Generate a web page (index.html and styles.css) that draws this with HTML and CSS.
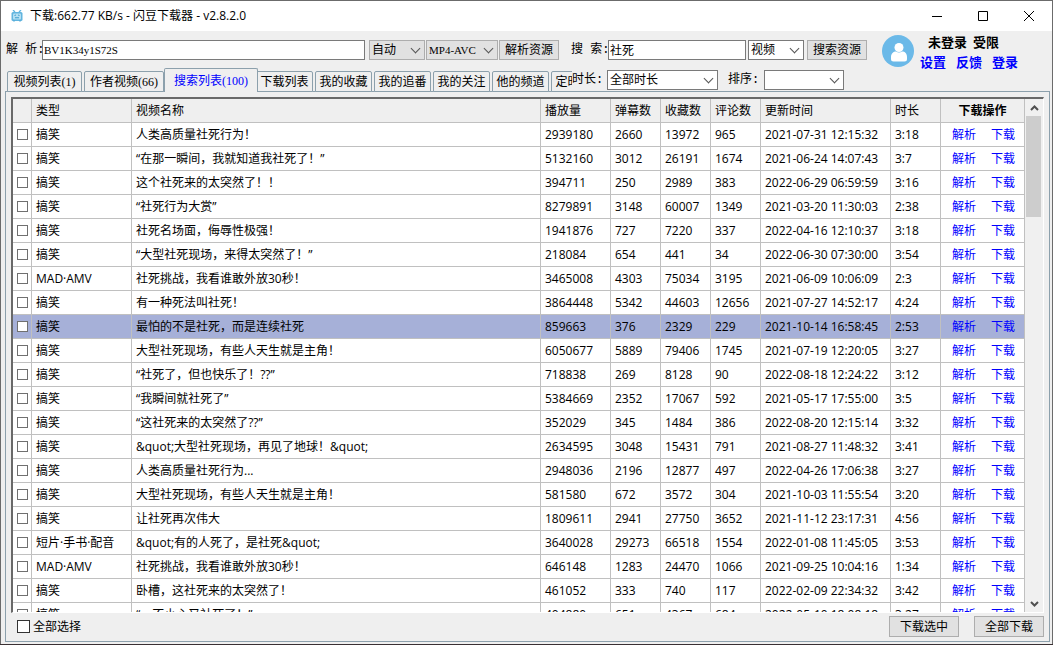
FILE: index.html
```html
<!DOCTYPE html>
<html lang="zh-CN">
<head>
<meta charset="utf-8">
<title>闪豆下载器</title>
<link rel="stylesheet" href="styles.css">
</head>
<body>
<div class="window">
  <header class="titlebar">
    <svg class="app-icon" viewBox="0 0 12 12" width="12" height="12">
      <path d="M2 0l2 2M10 0L8 2" stroke="#62b5df" stroke-width="1.3"/>
      <rect x="0.500" y="2" width="11" height="9" rx="1.5" fill="#62b5df"/>
      <rect x="2" y="3.5" width="8" height="6" rx="1" fill="#b4dff2"/>
      <path d="M3.500 5.500L5 5M8.500 5.500L7 5M4 7.500l1 .5 1-.5 1 .5 1-.5M3 10.500v1.200M9 10.500v1.200" stroke="#3f9fd0" fill="none"/>
    </svg>
    <h1 class="title">下载:662.77 KB/s - 闪豆下载器 - v2.8.2.0</h1>
    <div class="window-buttons">
      <button type="button" aria-label="最小化"><svg width="12" height="12" viewBox="0 0 12 12"><path d="M1 6.500h10"/></svg></button>
      <button type="button" aria-label="最大化"><svg width="12" height="12" viewBox="0 0 12 12"><path d="M1.500 1.500h9v9h-9z"/></svg></button>
      <button type="button" aria-label="关闭"><svg width="12" height="12" viewBox="0 0 12 12"><path d="M1 1l10 10M11 1L1 11"/></svg></button>
    </div>
  </header>

  <section class="top">
    <div class="controls">
      <form class="toolbar">
        <label class="parse-label" for="parse">解 析:</label>
        <input class="field parse-field" id="parse" type="text" value="BV1K34y1S72S">
        <span class="combo combo-flat combo-mode"><select aria-label="模式"><option>自动</option></select></span>
        <span class="combo combo-flat combo-format"><select class="latin" aria-label="格式"><option>MP4-AVC</option></select></span>
        <button class="btn btn-tool" type="button">解析资源</button>
        <label class="search-label" for="search">搜 索:</label>
        <input class="field search-field" id="search" type="text" value="社死">
        <span class="combo combo-kind"><select aria-label="类别"><option>视频</option></select></span>
        <button class="btn btn-tool" type="button">搜索资源</button>
      </form>
      <div class="second-row">
        <nav class="tabs" role="tablist">
          <button class="tab tab-one" role="tab" type="button">视频列表(1)</button>
          <button class="tab tab-two" role="tab" type="button">作者视频(66)</button>
          <button class="tab tab-active" role="tab" type="button" aria-selected="true">搜索列表(100)</button>
          <button class="tab" role="tab" type="button">下载列表</button>
          <button class="tab" role="tab" type="button">我的收藏</button>
          <button class="tab" role="tab" type="button">我的追番</button>
          <button class="tab" role="tab" type="button">我的关注</button>
          <button class="tab" role="tab" type="button">他的频道</button>
          <button class="tab" role="tab" type="button">定时下载</button>
        </nav>
        <label class="filter-label" for="duration">时长:</label>
        <span class="combo combo-duration"><select id="duration"><option>全部时长</option></select></span>
        <label class="sort-label" for="sort">排序:</label>
        <span class="combo combo-sort"><select id="sort"><option></option></select></span>
      </div>
    </div>
    <aside class="user">
      <svg class="avatar" width="32" height="32" viewBox="0 0 32 32">
        <circle cx="16" cy="16" r="16" fill="#6bb9e8"/>
        <circle cx="17" cy="12.500" r="4.500" fill="#fff"/>
        <path d="M9 24v-2c0-3.500 2.500-5.500 5-5.500q3 2 6 0c3 0 5 2 5 5.500v2q0 2.500-2.500 2.500h-11Q9 26.500 9 24z" fill="#fff"/>
      </svg>
      <div class="account">
        <p class="status"><span>未登录</span><span>受限</span></p>
        <p class="links"><a href="#settings">设置</a><a href="#feedback">反馈</a><a href="#login">登录</a></p>
      </div>
    </aside>
  </section>

  <main class="panel">
    <div class="list">
      <div class="list-view">
        <table>
          <colgroup>
            <col class="c-check"><col class="c-type"><col><col class="c-plays">
            <col class="c-count"><col class="c-count"><col class="c-count">
            <col class="c-time"><col class="c-length"><col class="c-actions">
          </colgroup>
          <thead>
            <tr><th></th><th>类型</th><th>视频名称</th><th>播放量</th><th>弹幕数</th><th>收藏数</th><th>评论数</th><th>更新时间</th><th>时长</th><th class="actions-head">下载操作</th></tr>
          </thead>
          <tbody id="rows"></tbody>
        </table>
      </div>
      <div class="scrollbar">
        <button class="up" type="button" aria-label="向上滚动"><svg width="9" height="6" viewBox="0 0 9 6"><path d="M1 5l3.500-3.500L8 5"/></svg></button>
        <div class="thumb"></div>
        <button class="down" type="button" aria-label="向下滚动"><svg width="9" height="6" viewBox="0 0 9 6"><path d="M1 1l3.500 3.500L8 1"/></svg></button>
      </div>
    </div>
    <footer class="footer">
      <label class="select-all"><input class="check check-all" type="checkbox">全部选择</label>
      <button class="btn btn-wide" type="button">下载选中</button>
      <button class="btn btn-wide" type="button">全部下载</button>
    </footer>
  </main>
</div>
<script src="app.js"></script>
</body>
</html>
```
FILE: styles.css
```css
* {
  box-sizing: border-box;
}

body {
  margin: 0;
  height: 100vh;
  padding-bottom: 1px;
  background: #3a3033;
  color: #000;
  font: 12px/16px "Open Sans", "Noto Sans CJK SC", sans-serif;
}

button,
input,
select {
  margin: 0;
  color: inherit;
  font: inherit;
}

.window {
  display: flex;
  flex-direction: column;
  height: 100%;
  border: 1px solid #6b6b6b;
  border-bottom: 0;
  background: #efefef;
}

.titlebar {
  display: flex;
  flex: none;
  align-items: center;
  height: 30px;
  padding-left: 10px;
  background: #fff;
}

.title {
  flex: 1;
  margin: 0 0 0 7px;
  font-size: 12px;
  font-weight: 400;
}

.window-buttons {
  display: flex;
}

.window-buttons button {
  display: flex;
  align-items: center;
  justify-content: center;
  width: 46px;
  height: 28px;
  padding: 0;
  border: 0;
  background: none;
}

.window-buttons path {
  fill: none;
  stroke: #000;
}

/* Toolbar and tabs */
.top {
  display: flex;
  flex: none;
  font-family: "Liberation Serif", "Noto Sans CJK SC", sans-serif;
}

.controls {
  flex: 1;
  min-width: 0;
}

.toolbar {
  display: flex;
  align-items: center;
  height: 37px;
  padding: 0 15px 0 5px;
}

.toolbar label,
.second-row label {
  flex: none;
  font-family: "Liberation Mono", "Noto Sans CJK SC", monospace;
  white-space: pre;
}

.toolbar .parse-label {
  width: 36px;
}

.toolbar .search-label {
  width: 37px;
  margin-left: 12px;
}

.field {
  min-width: 0;
  height: 20px;
  padding: 0 1px;
  border: 1px solid #7a7a7a;
  background: #fff;
}

.parse-field {
  flex: 1;
  margin-right: 4px;
  font-size: 11px;
}

.search-field {
  flex: none;
  width: 138px;
}

.combo {
  position: relative;
  display: block;
  flex: none;
  height: 20px;
}

.combo select {
  width: 100%;
  height: 100%;
  padding: 0 18px 0 2px;
  border: 1px solid #7a7a7a;
  border-radius: 0;
  background: #fff;
  appearance: none;
}

.combo-flat select {
  border-color: #adadad;
  background: #e1e1e1;
}

.combo .latin {
  padding-right: 16px;
  font-size: 11px;
}

.combo::after {
  content: "";
  position: absolute;
  top: 5px;
  right: 6px;
  width: 6px;
  height: 6px;
  border: solid #555;
  border-width: 0 1px 1px 0;
  transform: rotate(45deg);
  pointer-events: none;
}

.combo-mode {
  width: 56px;
  margin-right: 1px;
}

.combo-format {
  width: 72px;
  margin-right: 1px;
}

.combo-kind {
  width: 56px;
  margin: 0 3px 0 2px;
}

.combo-duration {
  width: 111px;
}

.combo-sort {
  width: 80px;
}

.btn {
  flex: none;
  height: 20px;
  padding: 0;
  border: 1px solid #adadad;
  background: #e1e1e1;
  white-space: nowrap;
}

.btn-tool {
  width: 60px;
}

.second-row {
  display: flex;
  align-items: center;
  height: 24px;
  padding: 0 38px 0 6px;
}

.tabs {
  position: relative;
  z-index: 1;
  display: flex;
  flex: 1;
  align-items: flex-end;
  gap: 2px;
  min-width: 0;
  height: 24px;
  overflow: hidden;
}

.tab {
  flex: none;
  width: 57px;
  height: 21px;
  padding: 0;
  border: 1px solid #8ca0ac;
  border-radius: 2px 2px 0 0;
  background: #efefef;
  white-space: nowrap;
}

.tab-one {
  width: 75px;
}

.tab-two {
  width: 80px;
  margin-right: -2px;
}

.tab-active {
  z-index: 1;
  width: 94px;
  height: 24px;
  margin-right: -4px;
  border-bottom: 0;
  color: #00f;
}

.second-row .filter-label {
  width: 35px;
}

.second-row .sort-label {
  width: 36px;
  margin-left: 10px;
}

.user {
  display: flex;
  flex: none;
  width: 170px;
  padding-top: 4px;
}

.account {
  margin-left: 6px;
  font-size: 13px;
  font-weight: 700;
  line-height: 20px;
}

.avatar {
  flex: none;
}

.status,
.links {
  display: flex;
  margin: 0;
}

.status {
  gap: 6px;
  height: 18px;
  padding-left: 8px;
  line-height: 16px;
}

.links {
  gap: 10px;
}

a {
  color: #00f;
  text-decoration: none;
}

/* Result list */
.panel {
  display: flex;
  flex: 1;
  flex-direction: column;
  min-height: 0;
  margin: -1px 2px 2px 4px;
  padding: 5px 5px 4px;
  border: 1px solid #8ca0ac;
}

.list {
  display: flex;
  flex: 1;
  min-height: 0;
  border: 2px solid #696969;
  border-right: 1px solid #fff;
  border-bottom: 1px solid #fff;
}

.list-view {
  flex: 1;
  min-width: 0;
  overflow: hidden;
  background: #fff;
}

table {
  width: 100%;
  border-collapse: separate;
  border-spacing: 0;
  table-layout: fixed;
}

th,
td {
  height: 24px;
  padding: 0 4px;
  border-right: 1px solid #c0c0c0;
  border-bottom: 1px solid #c0c0c0;
  text-align: left;
  font-weight: 400;
  white-space: nowrap;
}

th {
  background: #efefef;
}

.actions-head {
  text-align: center;
  font-weight: 700;
}

.c-check {
  width: 19px;
}

.c-type {
  width: 100px;
}

.c-plays {
  width: 70px;
}

.c-count,
.c-length {
  width: 50px;
}

.c-time {
  width: 130px;
}

.c-actions {
  width: 84px;
}

.selected td {
  background: #a6b0d8;
}

.actions a {
  margin-left: 7px;
}

.actions a + a {
  margin-left: 15px;
}

.check {
  display: block;
  width: 11px;
  height: 11px;
  border: 1px solid #707070;
  background: #fff;
  appearance: none;
}

.check:checked {
  background: #707070;
}

.scrollbar {
  display: flex;
  flex: none;
  flex-direction: column;
  width: 18px;
  background: #f0f0f0;
}

.scrollbar button {
  flex: none;
  height: 17px;
  padding: 0;
  border: 0;
  background: none;
  line-height: 6px;
}

.scrollbar path {
  fill: none;
  stroke: #505050;
  stroke-width: 2;
}

.thumb {
  height: 101px;
  margin: 0 2px 0 1px;
  background: #cdcdcd;
}

.scrollbar .down {
  margin-top: auto;
}

.footer {
  display: flex;
  flex: none;
  align-items: center;
  gap: 15px;
  padding-top: 3px;
}

.select-all {
  display: flex;
  flex: 1;
  align-items: center;
  gap: 3px;
  padding-left: 6px;
}

.check-all {
  width: 13px;
  height: 13px;
  border-color: #333;
}

.btn-wide {
  width: 70px;
  height: 21px;
}
```
FILE: app.js
```javascript
const videos = [
  ["搞笑", "人类高质量社死行为！", "2939180", "2660", "13972", "965", "2021-07-31 12:15:32", "3:18"],
  ["搞笑", "“在那一瞬间，我就知道我社死了！”", "5132160", "3012", "26191", "1674", "2021-06-24 14:07:43", "3:7"],
  ["搞笑", "这个社死来的太突然了！！", "394711", "250", "2989", "383", "2022-06-29 06:59:59", "3:16"],
  ["搞笑", "“社死行为大赏”", "8279891", "3148", "60007", "1349", "2021-03-20 11:30:03", "2:38"],
  ["搞笑", "社死名场面，侮辱性极强！", "1941876", "727", "7220", "337", "2022-04-16 12:10:37", "3:18"],
  ["搞笑", "“大型社死现场，来得太突然了！”", "218084", "654", "441", "34", "2022-06-30 07:30:00", "3:54"],
  ["MAD·AMV", "社死挑战，我看谁敢外放30秒！", "3465008", "4303", "75034", "3195", "2021-06-09 10:06:09", "2:3"],
  ["搞笑", "有一种死法叫社死！", "3864448", "5342", "44603", "12656", "2021-07-27 14:52:17", "4:24"],
  ["搞笑", "最怕的不是社死，而是连续社死", "859663", "376", "2329", "229", "2021-10-14 16:58:45", "2:53"],
  ["搞笑", "大型社死现场，有些人天生就是主角！", "6050677", "5889", "79406", "1745", "2021-07-19 12:20:05", "3:27"],
  ["搞笑", "“社死了，但也快乐了！??”", "718838", "269", "8128", "90", "2022-08-18 12:24:22", "3:12"],
  ["搞笑", "“我瞬间就社死了”", "5384669", "2352", "17067", "592", "2021-05-17 17:55:00", "3:5"],
  ["搞笑", "“这社死来的太突然了??”", "352029", "345", "1484", "386", "2022-08-20 12:15:14", "3:32"],
  ["搞笑", "&quot;大型社死现场，再见了地球！&quot;", "2634595", "3048", "15431", "791", "2021-08-27 11:48:32", "3:41"],
  ["搞笑", "人类高质量社死行为...", "2948036", "2196", "12877", "497", "2022-04-26 17:06:38", "3:27"],
  ["搞笑", "大型社死现场，有些人天生就是主角！", "581580", "672", "3572", "304", "2021-10-03 11:55:54", "3:20"],
  ["搞笑", "让社死再次伟大", "1809611", "2941", "27750", "3652", "2021-11-12 23:17:31", "4:56"],
  ["短片·手书·配音", "&quot;有的人死了，是社死&quot;", "3640028", "29273", "66518", "1554", "2022-01-08 11:45:05", "3:53"],
  ["MAD·AMV", "社死挑战，我看谁敢外放30秒！", "646148", "1283", "24470", "1066", "2021-09-25 10:04:16", "1:34"],
  ["搞笑", "卧槽，这社死来的太突然了！", "461052", "333", "740", "117", "2022-02-09 22:34:32", "3:42"],
  ["搞笑", "“一不小心又社死了！”", "404880", "651", "4367", "684", "2022-05-10 18:08:18", "3:27"]
];
const selectedRow = 8;

const body = document.getElementById("rows");
videos.forEach((video, index) => {
  const row = body.insertRow();
  if (index === selectedRow) row.className = "selected";

  const check = document.createElement("input");
  check.type = "checkbox";
  check.className = "check";
  check.setAttribute("aria-label", video[1]);
  row.insertCell().append(check);

  video.forEach((value) => {
    row.insertCell().textContent = value;
  });

  const actions = row.insertCell();
  actions.className = "actions";
  for (const name of ["解析", "下载"]) {
    const link = document.createElement("a");
    link.href = "#";
    link.textContent = name;
    actions.append(link);
  }
});
```
